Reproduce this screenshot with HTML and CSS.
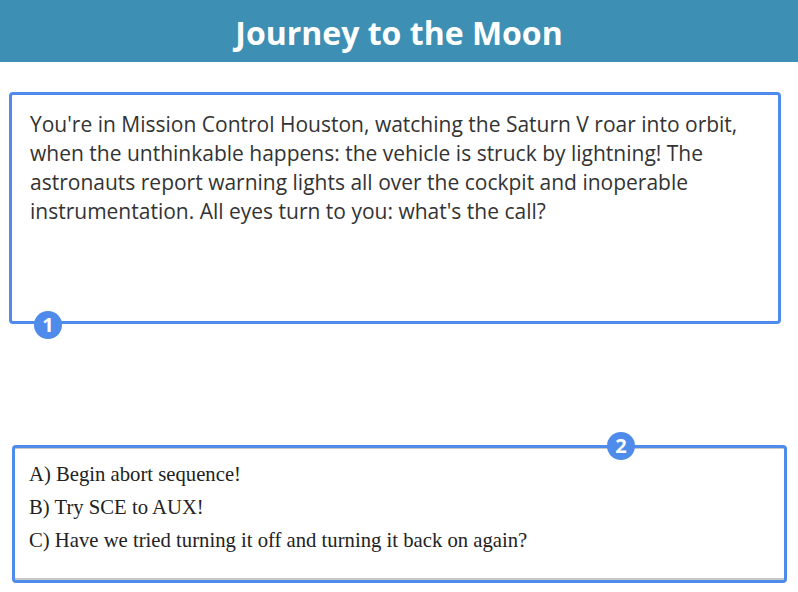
FILE: index.html
```html
<!DOCTYPE html>
<html>
<head>
<meta charset="utf-8">
<link rel="stylesheet" href="styles.css">
</head>
<body>
<header class="header"><h1 class="title">Journey to the Moon</h1></header>
<main class="main">
  <section class="story">
    <p class="story-text">You're in Mission Control Houston, watching the Saturn V roar into orbit, when the unthinkable happens: the vehicle is struck by lightning! The astronauts report warning lights all over the cockpit and inoperable instrumentation. All eyes turn to you: what's the call?</p>
    <span class="badge badge-one">1</span>
  </section>
  <section class="choices">
    <p class="choice">A) Begin abort sequence!</p>
    <p class="choice">B) Try SCE to AUX!</p>
    <p class="choice">C) Have we tried turning it off and turning it back on again?</p>
    <span class="badge badge-two">2</span>
  </section>
</main>
</body>
</html>
```
FILE: styles.css
```css
html, body { margin: 0; padding: 0; background: #fff; }
body { font-family: "Open Sans", "Liberation Sans", sans-serif; color: #333; }
.header {
  height: 62px;
  background: #3E8FB4;
  display: flex;
  align-items: center;
  justify-content: center;
}
.title {
  margin: 0;
  color: #fff;
  font-family: "Open Sans", sans-serif;
  font-weight: 700;
  font-size: 32px;
  line-height: 1;
  padding-top: 4px;
}
.main { display: flex; flex-direction: column; }
.story {
  position: relative;
  box-sizing: border-box;
  margin: 30px 0 0 9px;
  width: 772px;
  height: 232px;
  border: 3px solid #4F8BEB;
  border-radius: 4px;
  padding: 15px 18px 0 18px;
}
.story-text {
  margin: 0;
  font-size: 21px;
  line-height: 29px;
  color: #333;
}
.choices {
  position: relative;
  box-sizing: border-box;
  margin: 121px 0 0 12px;
  width: 775px;
  height: 138px;
  border: 3px solid #4F8BEB;
  border-radius: 4px;
  box-shadow: inset 0 1px 0 #c8c8c8, inset 0 -2px 0 #c8c8c8;
  padding: 10px 14px 0 14px;
}
.choice {
  margin: 0;
  font-family: "Liberation Serif", "DejaVu Serif", serif;
  font-size: 20.7px;
  line-height: 33px;
  color: #222;
}
.badge {
  position: absolute;
  width: 28px;
  height: 28px;
  border-radius: 50%;
  background: #4F8BEB;
  color: #fff;
  font-family: "Open Sans", sans-serif;
  font-weight: 700;
  font-size: 20px;
  line-height: 28px;
  text-align: center;
}
.badge-one { left: 22px; bottom: -18px; }
.badge-two { left: 592px; top: -16px; }
```
